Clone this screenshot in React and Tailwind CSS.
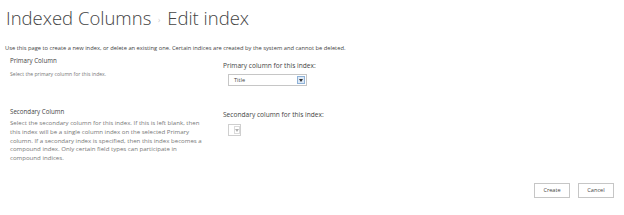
import React from 'react';

const font = { fontFamily: '"Segoe UI", "Open Sans", "Liberation Sans", sans-serif' };

const Select = ({ value, width, disabled }) => (
  <div
    className={`flex h-[12px] items-stretch border ${disabled ? 'border-[#cfcfcf]' : 'border-[#c6c6c6]'} bg-white`}
    style={{ width }}
  >
    <span className="flex-1 pl-[5px] text-[5.6px] leading-[10px] text-[#444]">{value}</span>
    <span
      className={`my-[1px] mr-[1px] flex w-[8px] items-center justify-center border ${
        disabled ? 'border-[#dadada] bg-white' : 'border-[#8fb2d8] bg-[#dde9f6]'
      }`}
    >
      <svg width="4" height="3" viewBox="0 0 4 3">
        <path d="M0 0h4L2 3z" fill={disabled ? '#b0b0b0' : '#333'} />
      </svg>
    </span>
  </div>
);

const App = () => {
  return (
    <div className="relative h-[215px] w-[624px] overflow-hidden bg-white" style={font}>
      {/* breadcrumb, mostly scrolled off */}
      <div className="mt-[-7px] flex h-[10px] items-end pl-[6px] text-[6px] leading-[9px]">
        <span className="text-[#0072c6]">Home</span>
        <span className="ml-[24px] text-[#777]">›&nbsp;&nbsp;Edit Links</span>
      </div>

      <h1 className="mt-[2px] pl-[6px] text-[18.5px] leading-[26px] font-light text-[#444]">
        Indexed Columns <span className="mx-[2px] align-middle text-[9px] text-[#aaa]">›</span> Edit index
      </h1>

      <p className="mt-[10px] pl-[5px] text-[5.75px] leading-[10px] text-[#444]">
        Use this page to create a new index, or delete an existing one. Certain indices are created by the system and cannot be deleted.
      </p>

      <div className="mt-[3px] flex">
        <div className="w-[223px] pl-[10px]">
          <div className="text-[6.2px] leading-[10px] text-[#444]">Primary Column</div>
          <div className="mt-[4px] text-[5.1px] leading-[9px] text-[#777]">
            Select the primary column for this index.
          </div>
        </div>
        <div className="pt-[5px]">
          <div className="text-[6.6px] leading-[10px] text-[#444]">Primary column for this index:</div>
          <div className="mt-[3px] pl-[5px]">
            <Select value="Title" width={79} />
          </div>
        </div>
      </div>

      <div className="mt-[21px] flex">
        <div className="w-[223px] pl-[10px]">
          <div className="text-[6.2px] leading-[10px] text-[#444]">Secondary Column</div>
          <div className="mt-[2px] w-[193px] text-[6.1px] leading-[8.8px] text-[#777]">
            Select the secondary column for this index. If this is left blank, then this index will be a single column
            index on the selected Primary column. If a secondary index is specified, then this index becomes a compound
            index. Only certain field types can participate in compound indices.
          </div>
        </div>
        <div className="pt-[3px]">
          <div className="text-[6.6px] leading-[10px] text-[#444]">Secondary column for this index:</div>
          <div className="mt-[4px] pl-[5px]">
            <Select value="" width={13} disabled />
          </div>
        </div>
      </div>

      <div className="absolute top-[183px] right-[10px] flex gap-[8px]">
        <button className="h-[15px] w-[36px] border border-[#c6c6c6] bg-white text-[5.6px] text-[#444]">Create</button>
        <button className="h-[15px] w-[36px] border border-[#c6c6c6] bg-white text-[5.6px] text-[#444]">Cancel</button>
      </div>
    </div>
  );
};

export default App;
